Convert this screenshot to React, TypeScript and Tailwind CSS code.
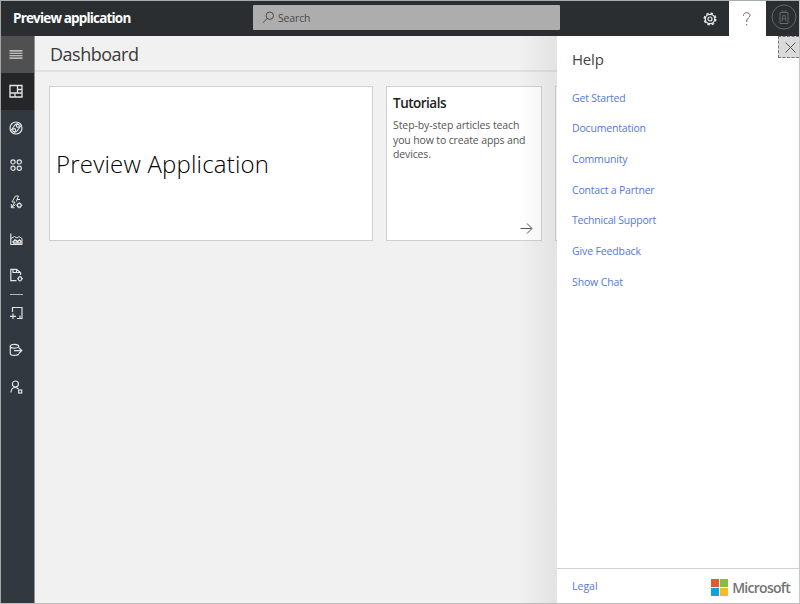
import type { ReactNode } from "react";

const ui = "font-['Open_Sans','Noto_Sans',sans-serif]";

function Icon({ children, size = 16 }: { children: ReactNode; size?: number }) {
  return (
    <svg width={size} height={size} viewBox="0 0 16 16" fill="none" stroke="currentColor" strokeWidth="1.2">
      {children}
    </svg>
  );
}

const navIcons: ReactNode[] = [
  <Icon><path d="M2 2.500h12v11.500H2zM9.500 2.500v7.500M9.500 6.500H14M2 10h12M7 10v4" strokeWidth="1.300" /></Icon>,
  <Icon>
    <circle cx="8" cy="8" r="6" />
    <path d="M3 10.500L6.500 5.500c1-1.500 2-1.800 3.500-1.800M13 5.500L9.500 10.500c-1 1.500-2 1.800-3.500 1.800" />
    <circle cx="9.800" cy="5.800" r="1.500" />
    <circle cx="6.200" cy="10.200" r="1.500" />
  </Icon>,
  <Icon>
    <circle cx="5" cy="4.900" r="2.100" /><circle cx="11.300" cy="4.900" r="2.100" />
    <circle cx="5" cy="11.200" r="2.100" /><circle cx="11.300" cy="11.200" r="2.100" />
  </Icon>,
  <Icon>
    <g strokeWidth="1">
      <path d="M12 5.500H9l1.500-3.500H7.500L4 8h3L3.500 13.500 7.500 10.500M3.300 10v3.700H6.500M9 5.500L8.500 7.500" />
      <circle cx="11.300" cy="11.300" r="1.900" strokeWidth="1.300" />
      <path d="M11.300 8.300v1M11.300 13.300v1M8.300 11.300h1M13.300 11.300h1" />
    </g>
  </Icon>,
  <Icon>
    <path d="M2.800 2.500v11H14.200" />
    <path d="M3 7.500l3.500-2L9 7l2-1.500 3 2v6" strokeWidth="1" />
    <path d="M4.500 11.500l2.500-2.500 2.500 1.500 2-1.500 2 2M5 12h8.500" strokeWidth="1.500" />
  </Icon>,
  <Icon>
    <path d="M8.500 13.700H2.800V2.300H8.500L12.500 5.500V8M5 2.500V5.500H12M8.500 2.500V5.500" />
    <circle cx="12" cy="11.700" r="1.800" /><path d="M12 8.900v1M12 13.500v1M9.200 11.700h1M13.800 11.700h1" />
  </Icon>,
];

const lowerIcons: ReactNode[] = [
  <Icon>
    <path d="M4.500 7V2.500h9.500v11H9M5 8.500v5.500M2 11.300h6" />
    <path d="M12 10.500v3H14" />
  </Icon>,
  <Icon>
    <ellipse cx="6.500" cy="4.200" rx="4.200" ry="1.900" />
    <path d="M2.300 4.200v7.300c0 1 1.900 1.900 4.200 1.900s4.200-.9 4.200-1.900M10.700 4.200v1.500M6 8.600h7.500M11 6l2.800 2.600L11 11.200" />
  </Icon>,
  <Icon>
    <circle cx="7.400" cy="5" r="3" />
    <path d="M3 13.500c0-3 1.800-5 4.300-5 1.500 0 2.600.6 3.300 1.800" />
    <rect x="10.700" y="11" width="3" height="3" />
  </Icon>,
];

const links = [
  { text: "Get Started", cls: "tracking-[-0.2px]" },
  { text: "Documentation", cls: "tracking-[-0.18px]" },
  { text: "Community", cls: "tracking-[-0.18px]" },
  { text: "Contact a Partner", cls: "tracking-[-0.2px]" },
  { text: "Technical Support", cls: "tracking-[-0.22px]" },
  { text: "Give Feedback", cls: "tracking-[-0.13px]" },
  { text: "Show Chat", cls: "tracking-[-0.13px]" },
];

function TopBar() {
  return (
    <header className="flex h-[35px] shrink-0 items-stretch bg-[#2a2e31] text-white">
      <h1 className="flex w-[252px] items-center pl-3 text-[13.5px] font-bold whitespace-nowrap tracking-[-0.83px]">
        Preview application
      </h1>
      <div className="mt-1 flex h-[25px] w-[307px] items-center rounded-[1px] bg-[#adadad] pl-[9px] text-[#4a4a4a]">
        <svg width="13" height="13" viewBox="0 0 13 13" fill="none" stroke="currentColor">
          <circle cx="7.800" cy="4.700" r="3.700" /><path d="M5.200 7.400L1 11.700" />
        </svg>
        <span className="ml-[3px] pt-[2px] text-[10.5px] tracking-[-0.15px]">Search</span>
      </div>
      <button className="ml-auto flex w-[37px] items-center justify-center pr-[2px]">
        <svg width="16" height="16" viewBox="0 0 16 16" fill="none" stroke="#e8e8e8">
          <circle cx="8" cy="8" r="5.800" strokeWidth="1.400" strokeDasharray="2.500 2.050" />
          <circle cx="8" cy="8" r="4.700" strokeWidth="1.300" /><circle cx="8" cy="8" r="2" strokeWidth="1.200" />
        </svg>
      </button>
      <button className="flex w-[37px] items-center justify-center bg-white pr-[2px]">
        <svg width="10" height="14" viewBox="0 0 10 14" fill="none" stroke="#666">
          <path d="M1.500 4V3.500C1.500 1.800 2.800.7 4.600.7S8 1.800 8 3.400C8 5.800 4.700 6 4.700 9v1" /><path d="M4.700 12v1.300" />
        </svg>
      </button>
      <div className="flex w-[33px] items-center justify-center pb-[3px] pl-[2px]">
        <svg width="26" height="26" viewBox="0 0 26 26" fill="none" stroke="#65686a" className="shrink-0">
          <circle cx="13" cy="13" r="12" />
          <path d="M9 8.500h8v11H9zM10.500 6l2.500 2.500L15.500 6M11 17l1-5.500h2L15 17M11.500 15h3" />
        </svg>
      </div>
    </header>
  );
}

function Sidebar() {
  return (
    <nav className="flex w-[34px] shrink-0 flex-col border-r border-[#8e9294] bg-[#31383f] text-[#e2e3e4]">
      <button className="flex h-[37px] items-center justify-center bg-[#505050] pr-[3px]">
        <svg width="14" height="9" viewBox="0 0 14 9" stroke="#dcdcdc" strokeWidth="1.100"><path d="M.5 .9h13M.5 3.300h13M.5 5.700h13M.5 8.100h13" /></svg>
      </button>
      {navIcons.map((icon, i) => (
        <button key={i} className={`flex h-[36.8px] items-center justify-center pr-[3px] ${i === 0 ? "bg-[#252627]" : ""}`}>
          {icon}
        </button>
      ))}
      <div className="ml-[9px] h-px w-[13px] bg-[#b5b8ba]" />
      {lowerIcons.map((icon, i) => (
        <button key={i} className="flex h-[36.8px] items-center justify-center pr-[3px]">{icon}</button>
      ))}
    </nav>
  );
}

function Dashboard() {
  return (
    <main className="relative min-w-0 flex-1 overflow-hidden bg-[#f1f1f1]">
      <div className="flex h-[36px] items-center border-b-2 border-[#e2e2e2] pt-[3px] pl-[15px]">
        <h2 className="text-[18px] tracking-[-0.5px] text-[#3a3a3a]">Dashboard</h2>
      </div>
      <div className="flex w-[800px] pt-[14px] pl-[14px]">
        <section className="flex h-[155px] w-[324px] items-center border border-[#d0d0d0] bg-white pl-[6px]">
          <p className="text-[24px] font-light whitespace-nowrap tracking-[0.2px] text-black">Preview Application</p>
        </section>
        <section className="ml-[13px] flex h-[155px] w-[156px] flex-col border border-[#d0d0d0] bg-white px-[6px] pt-[7px]">
          <h3 className="text-[13.500px] leading-[18px] font-semibold tracking-[-0.5px] text-[#222]">Tutorials</h3>
          <p className="mt-[6px] text-[10.5px] leading-[14.500px] whitespace-nowrap tracking-[-0.13px] text-[#555]">
            <span className="tracking-[-0.09px]">Step-by-step articles teach</span><br />you how to create apps and<br />devices.
          </p>
          <svg className="mt-auto mr-[2px] mb-[5px] self-end" width="13" height="13" viewBox="0 0 13 13" fill="none" stroke="#555">
            <path d="M.5 6.500h11M7 1.500l5 5-5 5" />
          </svg>
        </section>
        <section className="ml-[13px] h-[155px] w-[155px] border border-[#d0d0d0] bg-white" />
      </div>
      <div className="absolute inset-y-0 right-0 w-[38px] bg-linear-to-l from-black/[0.06] to-transparent" />
    </main>
  );
}

function HelpPanel() {
  return (
    <aside className="flex w-[242px] shrink-0 flex-col bg-white text-[10.5px]">
      <div className="flex h-[54px] justify-between pl-[15px]">
        <h2 className="pt-[12px] text-[15px] leading-[22px] tracking-[-0.2px] text-[#444]">Help</h2>
        <button className="flex h-[22px] w-[21px] items-center justify-center border border-r-0 border-dashed border-[#777] bg-[#dadada] pl-[2px]">
          <svg width="11" height="11" viewBox="0 0 11 11" stroke="#555"><path d="M.5.5l10 10M10.500.5l-10 10" /></svg>
        </button>
      </div>
      <ul className="flex-1 pt-[0.7px] pl-[15px] text-[#5579d8]">
        {links.map((l) => (
          <li key={l.text} className="h-[30.700px] leading-[15px]"><a className={l.cls}>{l.text}</a></li>
        ))}
      </ul>
      <footer className="flex h-[35px] items-center justify-between border-t border-[#d0d0d0] pr-[9px] pl-[15px]">
        <a className="pt-[2px] text-[#5579d8]">Legal</a>
        <div className="flex items-center gap-[4px] pt-[3px]">
          <div className="grid grid-cols-2 gap-px">
            <i className="size-2 bg-[#e45b2b]" /><i className="size-2 bg-[#84bd40]" />
            <i className="size-2 bg-[#0ba3df]" /><i className="size-2 bg-[#f7b927]" />
          </div>
          <span className="text-[14px] leading-[17px] font-semibold tracking-[-0.72px] text-[#737373]">Microsoft</span>
        </div>
      </footer>
    </aside>
  );
}

export default function App() {
  return (
    <div className={`flex h-[604px] w-[800px] flex-col overflow-hidden border border-t-[#a5adab] border-r-[#c8c8c8] border-b-[#bcbcbc] border-l-[#a5a5a5] ${ui}`}>
      <TopBar />
      <div className="flex min-h-0 flex-1">
        <Sidebar />
        <Dashboard />
        <HelpPanel />
      </div>
    </div>
  );
}
